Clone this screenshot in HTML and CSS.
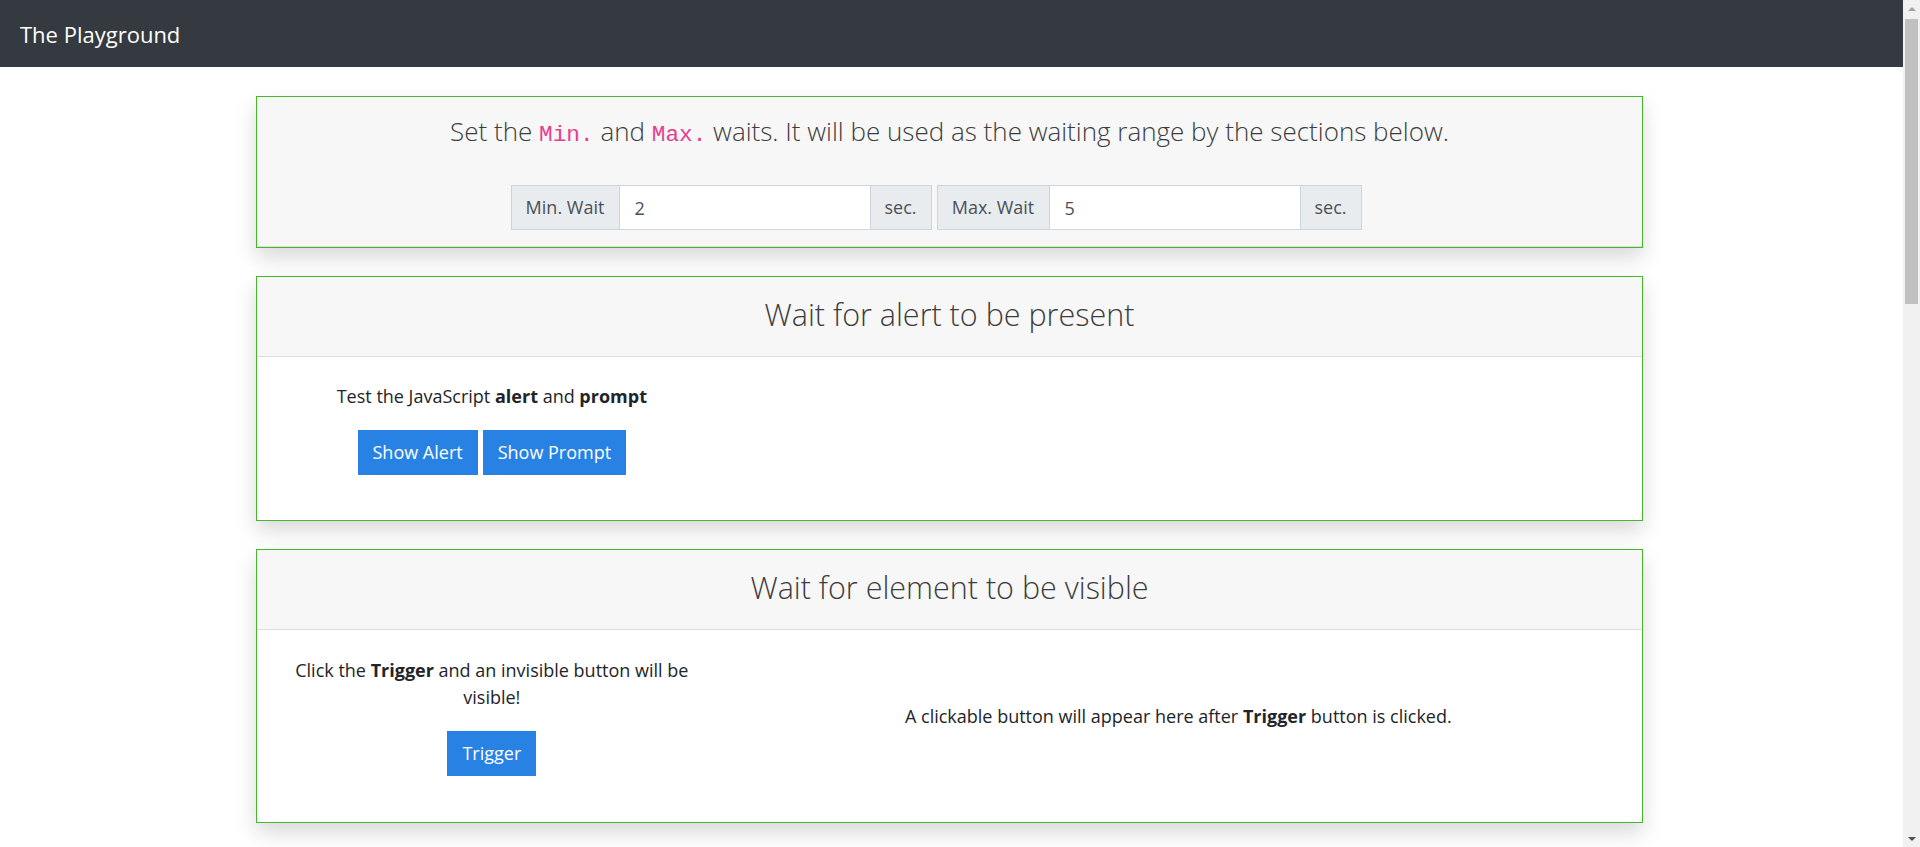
FILE: index.html
```html
<!DOCTYPE html>
<html lang="en">
<head>
<meta charset="utf-8">
<title>The Playground</title>
<link rel="stylesheet" href="styles.css">
</head>
<body>
<div class="frame">
  <div class="viewport">
    <nav class="navbar"><span class="brand">The Playground</span></nav>
    <main class="container">
      <section class="card">
        <div class="card-header settings">
          <h4 class="settings-title">Set the <code>Min.</code> and <code>Max.</code> waits. It will be used as the waiting range by the sections below.</h4>
          <div class="wait-groups">
            <div class="input-group">
              <span class="addon addon-min">Min. Wait</span>
              <input class="wait-input" type="text" value="2">
              <span class="addon addon-sec">sec.</span>
            </div>
            <div class="input-group">
              <span class="addon addon-max">Max. Wait</span>
              <input class="wait-input" type="text" value="5">
              <span class="addon addon-sec">sec.</span>
            </div>
          </div>
        </div>
      </section>

      <section class="card">
        <div class="card-header title-header"><h2 class="card-title">Wait for alert to be present</h2></div>
        <div class="card-body">
          <div class="col">
            <p class="col-text">Test the JavaScript <b>alert</b> and <b>prompt</b></p>
            <div class="btn-row">
              <button class="btn" type="button">Show Alert</button>
              <button class="btn" type="button">Show Prompt</button>
            </div>
          </div>
        </div>
      </section>

      <section class="card">
        <div class="card-header title-header"><h2 class="card-title">Wait for element to be visible</h2></div>
        <div class="card-body card-body-tall">
          <div class="col">
            <p class="col-text">Click the <b>Trigger</b> and an invisible button will be visible!</p>
            <div class="btn-row">
              <button class="btn" type="button">Trigger</button>
            </div>
          </div>
          <div class="col col-wide">
            <p class="col-text note">A clickable button will appear here after <b>Trigger</b> button is clicked.</p>
          </div>
        </div>
      </section>
    </main>
  </div>
  <div class="scrollbar" aria-hidden="true">
    <span class="sb-btn sb-up"></span>
    <div class="sb-track"><span class="sb-thumb"></span></div>
    <span class="sb-btn sb-down"></span>
  </div>
</div>
</body>
</html>
```

FILE: styles.css
```css
* { box-sizing: border-box; }
html, body { margin: 0; padding: 0; }
body {
  font-family: "Open Sans", "Noto Sans", sans-serif;
  font-size: 18px;
  line-height: 27px;
  color: #212529;
  background: #fff;
}
.frame { display: flex; height: 100vh; overflow: hidden; }
.viewport { flex: 1; min-width: 0; overflow: hidden; }

.navbar {
  height: 67px;
  background: #343a40;
  display: flex;
  align-items: center;
  padding: 0 20px;
}
.brand { color: #fff; font-size: 22px; line-height: 30px; }

.container {
  width: 1387px;
  margin-left: 256px;
  padding: 29px 0 0;
}
.card {
  border: 1px solid #43b829;
  background: #fff;
  box-shadow: 0 10px 20px rgba(0,0,0,.15);
  margin-bottom: 28px;
}
.card-header { background: #f7f7f7; border-bottom: 1px solid #dcdcdc; }

.settings { padding: 19px 20px 16px; text-align: center; }
.settings-title {
  margin: 0 0 39px;
  height: 30px;
  font-size: 26px;
  line-height: 30px;
  font-weight: 300;
  color: #3d3d3d;
}
code { font-family: "Liberation Mono", monospace; color: #e83e8c; font-size: 87.5%; line-height: 1; }

.wait-groups { display: flex; justify-content: center; gap: 5px; padding-right: 27px; }
.input-group { display: flex; height: 45px; }
.addon {
  display: flex; align-items: center; justify-content: center;
  background: #e9ecef; border: 1px solid #ced4da; color: #495057;
}
.addon-min { width: 109px; }
.addon-max { width: 113px; }
.addon-sec { width: 62px; }
.wait-input {
  width: 250px; height: 45px;
  border: 1px solid #ced4da; border-left: 0; border-right: 0;
  padding: 0 15px; font: inherit; color: #495057; background: #fff; outline: none;
}

.title-header { height: 80px; display: flex; align-items: center; justify-content: center; }
.card-title {
  margin: 0; padding-bottom: 6px;
  font-size: 30.5px; line-height: 38px; font-weight: 300; color: #3d3d3d;
}
.card-body {
  padding: 26px 6px 45px;
  display: grid;
  grid-template-columns: 1fr 2fr;
  align-items: center;
}
.card-body-tall { padding-top: 27px; padding-bottom: 46px; }
.col { padding: 0 19px; text-align: center; }
.col-text { margin: 0 0 20px; }
.note { margin: 0; }
.btn-row { display: flex; justify-content: center; gap: 5px; }
.btn {
  height: 45px; padding: 0 15px; border: 0;
  background: #2882e4; color: #fff;
  font: inherit; cursor: pointer;
}

.scrollbar {
  flex: none; width: 17px; height: 100vh;
  background: #f1f1f1;
  display: flex; flex-direction: column;
}
.sb-btn { flex: none; height: 17px; display: flex; align-items: center; justify-content: center; }
.sb-up::before {
  content: ""; width: 0; height: 0;
  border-left: 4px solid transparent; border-right: 4px solid transparent;
  border-bottom: 4px solid #a3a3a3;
}
.sb-down::before {
  content: ""; width: 0; height: 0;
  border-left: 4px solid transparent; border-right: 4px solid transparent;
  border-top: 4px solid #505050;
}
.sb-track { flex: 1; padding: 2px 2px 0; }
.sb-thumb { display: block; height: 285px; background: #c1c1c1; }
```
